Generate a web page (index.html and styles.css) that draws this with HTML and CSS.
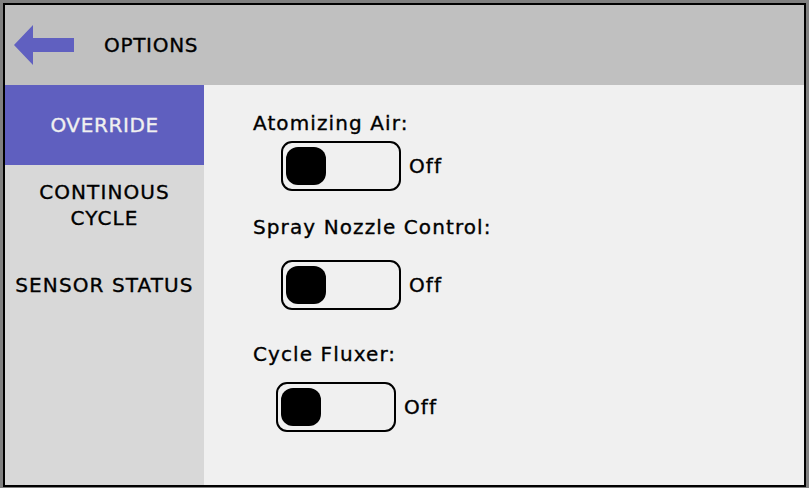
FILE: index.html
```html
<!DOCTYPE html>
<html>
<head>
<meta charset="utf-8">
<link rel="stylesheet" href="styles.css">
</head>
<body>
<div class="frame">
  <header class="topbar">
    <svg class="back" width="60" height="40" viewBox="0 0 60 40"><polygon points="0,20 19,0 19,13 60,13 60,27 19,27 19,40" fill="#6060c0"/></svg>
    <span class="title">OPTIONS</span>
  </header>
  <div class="body">
    <nav class="side">
      <div class="item active">OVERRIDE</div>
      <div class="item">CONTINOUS<br>CYCLE</div>
      <div class="item">SENSOR STATUS</div>
    </nav>
    <main class="content">
      <div class="label">Atomizing Air:</div>
      <div class="row row1"><div class="toggle"><div class="knob"></div></div><span class="state">Off</span></div>
      <div class="label label2">Spray Nozzle Control:</div>
      <div class="row row2"><div class="toggle"><div class="knob"></div></div><span class="state">Off</span></div>
      <div class="label label3">Cycle Fluxer:</div>
      <div class="row row3"><div class="toggle"><div class="knob"></div></div><span class="state">Off</span></div>
    </main>
  </div>
</div>
</body>
</html>
```
FILE: styles.css
```css
html, body {
  margin: 0;
  padding: 0;
}
body {
  background: #808080;
  width: 809px;
  height: 488px;
  overflow: hidden;
  font-family: "DejaVu Sans", sans-serif;
  font-size: 20px;
  letter-spacing: 1.1px;
  -webkit-text-stroke: 0.35px currentColor;
  color: #000;
}
.frame {
  margin: 3px 0 0 3px;
  width: 799px;
  height: 480px;
  border: 2px solid #000;
  display: flex;
  flex-direction: column;
  background: #f0f0f0;
}
.topbar {
  height: 80px;
  background: #c0c0c0;
  display: flex;
  align-items: center;
  padding-left: 9px;
  flex-shrink: 0;
}
.back {
  display: block;
  margin-right: 30px;
}
.title {
  line-height: 22px;
  letter-spacing: 0.7px;
}
.body {
  flex: 1;
  display: flex;
}
.side {
  width: 199px;
  background: #d8d8d8;
  flex-shrink: 0;
}
.item {
  height: 80px;
  display: flex;
  align-items: center;
  justify-content: center;
  text-align: center;
  line-height: 26px;
}
.item.active {
  background: #5f5fbf;
  color: #f0f0f0;
  letter-spacing: 0.6px;
}
.content {
  flex: 1;
  background: #f0f0f0;
  padding: 27px 0 0 49px;
}
.label {
  line-height: 22px;
}
.label2 { margin-top: 25px; }
.label3 { margin-top: 33px; }
.row {
  display: flex;
  align-items: center;
  gap: 8px;
}
.row1 { margin: 7px 0 0 28px; }
.row2 { margin: 22px 0 0 28px; }
.row3 { margin: 17px 0 0 23px; }
.toggle {
  box-sizing: border-box;
  width: 120px;
  height: 50px;
  border: 2px solid #000;
  border-radius: 11px;
  display: flex;
  align-items: center;
  padding-left: 3px;
}
.knob {
  width: 40px;
  height: 38px;
  background: #000;
  border-radius: 12px;
}
.state {
  line-height: 22px;
}
```
